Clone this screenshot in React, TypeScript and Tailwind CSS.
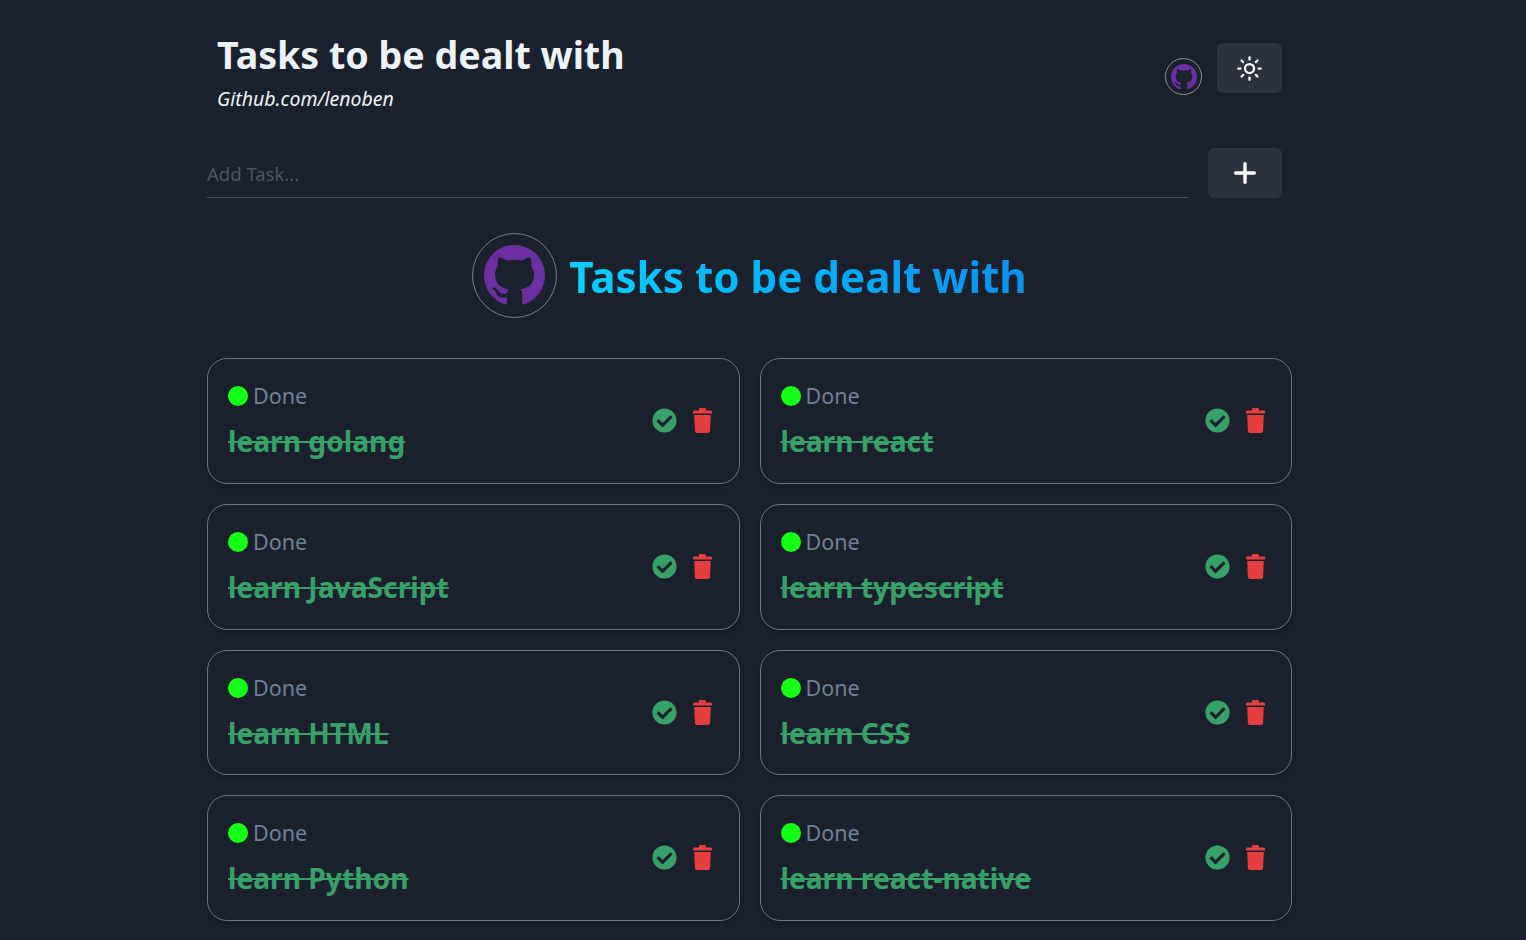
import React from "react";
import { FaCheckCircle } from "react-icons/fa";
import { BsGithub } from "react-icons/bs";
import { Plus, Sun } from "lucide-react";

const tasks = [
  "learn golang",
  "learn react",
  "learn JavaScript",
  "learn typescript",
  "learn HTML",
  "learn CSS",
  "learn Python",
  "learn react-native",
];

function TrashIcon() {
  return (
    <svg viewBox="0 0 19 25" className="w-[19px] h-[25px] text-[#e53e3e]" fill="currentColor">
      <path d="M6 2.6V1.4C6 .6 6.6 0 7.4 0h4.2c.8 0 1.4.6 1.4 1.4v1.2h4.6c.8 0 1.4.6 1.4 1.4v1.6H0V4c0-.8.6-1.4 1.4-1.4H6z" />
      <path d="M1.2 6.9h16.6l-.7 16.2c0 1-.8 1.9-1.9 1.9H3.8c-1.1 0-1.9-.9-1.9-1.9L1.2 6.9z" />
    </svg>
  );
}

function TaskCard({ title }: { title: string }) {
  return (
    <div className="h-[125.75px] rounded-[20px] border border-[#6f7582] bg-[#1a202c] pl-5 pr-[26.3px] flex items-center justify-between shadow-md">
      <div className="flex flex-col">
        <div className="flex items-center gap-[5px] h-[30px] mt-[1px]">
          <span className="w-5 h-5 rounded-full bg-[#16ff16]" />
          <span className="text-[21.5px] text-[#718096] leading-[28px]">Done</span>
        </div>
        <div className="mt-[9px] text-[28.2px] leading-[42px] font-bold text-[#38a169] line-through">
          {title}
        </div>
      </div>
      <div className="flex items-center gap-4 -mt-[1px]">
        <FaCheckCircle className="w-[25px] h-[25px] text-[#38a169]" />
        <TrashIcon />
      </div>
    </div>
  );
}

export default function App() {
  return (
    <div className="h-[940px] overflow-hidden bg-[#1a202c] text-[#edf2f7] font-['Noto_Sans','Open_Sans',sans-serif]">
      <div className="w-[1085px] ml-[207px]">
        <header className="flex items-center justify-between px-[10px] pt-[28px]">
          <div>
            <h1 className="text-[37.6px] leading-[54px] font-bold">Tasks to be dealt with</h1>
            <p className="mt-[2px] text-[19.5px] leading-[30px] italic">Github.com/lenoben</p>
          </div>
          <div className="flex items-start gap-[15px] -mt-[4px]">
            <div className="w-[37px] h-[37px] mt-[15px] rounded-full border border-[#8b8f98] flex items-center justify-center">
              <BsGithub className="w-[26px] h-[26px] text-[#6b2fa0]" />
            </div>
            <button className="w-[65px] h-[50px] rounded-md bg-[#2c323e] flex items-center justify-center">
              <Sun size={27} strokeWidth={2} className="text-white" />
            </button>
          </div>
        </header>

        <div className="flex items-center gap-5 mt-[34px] pr-[10px]">
          <div className="flex-1 h-[50px] border-b border-[#4a505c] flex items-center pt-[2px] text-[18.5px] text-[#4f5561]">
            Add Task...
          </div>
          <button className="w-[74px] h-[50px] rounded-md bg-[#2c323e] flex items-center justify-center">
            <Plus size={32} strokeWidth={2.5} className="text-white" />
          </button>
        </div>

        <div className="flex items-center justify-center gap-3 mt-[35px]">
          <div className="w-[85px] h-[85px] rounded-full border border-[#7b7f88] flex items-center justify-center">
            <BsGithub className="w-[61px] h-[61px] text-[#6b2fa0]" />
          </div>
          <h2 className="pt-[2px] text-[42.2px] leading-[60px] font-bold text-transparent bg-clip-text bg-gradient-to-r from-[#0bd0ff] to-[#0e90ec]">
            Tasks to be dealt with
          </h2>
        </div>

        <div className="grid grid-cols-2 gap-5 mt-[40.2px]">
          {tasks.map((t) => (
            <TaskCard key={t} title={t} />
          ))}
        </div>
      </div>
    </div>
  );
}
